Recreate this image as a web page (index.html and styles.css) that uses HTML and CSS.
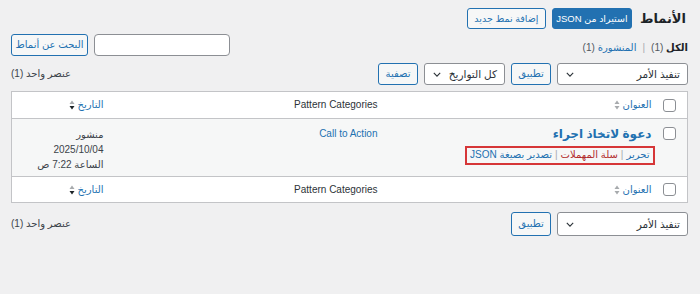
FILE: index.html
```html
<!DOCTYPE html>
<html lang="ar" dir="rtl">
<head>
<meta charset="utf-8">
<title>الأنماط</title>
<link rel="stylesheet" href="styles.css">
</head>
<body>
<div class="wrap">
  <div class="head">
    <h1 class="title">الأنماط</h1>
    <a class="btn primary">استيراد من JSON</a>
    <a class="btn add">إضافة نمط جديد</a>
  </div>

  <div class="row2">
    <ul class="subsub">
      <li><b class="current">الكل</b> <span class="count">(1)</span></li>
      <li class="sep">|</li>
      <li><a class="link">المنشورة</a> <span class="count">(1)</span></li>
    </ul>
    <div class="search">
      <div class="input"></div>
      <a class="btn">البحث عن أنماط</a>
    </div>
  </div>

  <div class="tablenav">
    <div class="actions">
      <div class="select bulk"><span>تنفيذ الأمر</span><svg class="chev" viewBox="0 0 10 6" width="8" height="5"><path d="M1 1l4 4 4-4" fill="none" stroke="#2c3338" stroke-width="1.4"/></svg></div>
      <a class="btn">تطبيق</a>
      <div class="select dates"><span>كل التواريخ</span><svg class="chev" viewBox="0 0 10 6" width="8" height="5"><path d="M1 1l4 4 4-4" fill="none" stroke="#2c3338" stroke-width="1.4"/></svg></div>
      <a class="btn">تصفية</a>
    </div>
    <div class="num">عنصر واحد (1)</div>
  </div>

  <table class="list">
    <colgroup>
      <col class="c-check"><col><col><col class="c-date">
    </colgroup>
    <thead>
      <tr>
        <td class="check"><span class="cb"></span></td>
        <th><a class="link sort">العنوان <svg class="arrows" viewBox="0 0 6 10" width="6" height="10"><path d="M3 0.5L5.5 4H0.5z" fill="#a7aaad"/><path d="M3 9.5L5.5 6H0.5z" fill="#a7aaad"/></svg></a></th>
        <th class="plain">Pattern Categories</th>
        <th><a class="link sort">التاريخ <svg class="arrows" viewBox="0 0 6 10" width="6" height="10"><path d="M3 0.5L5.5 4H0.5z" fill="#a7aaad"/><path d="M3 9.5L5.5 6H0.5z" fill="#1d2327"/></svg></a></th>
      </tr>
    </thead>
    <tbody>
      <tr class="item">
        <td class="check"><span class="cb"></span></td>
        <td>
          <a class="link row-title">دعوة لاتخاذ اجراء</a>
          <div class="row-actions"><a class="link">تحرير</a><span class="bar">|</span><a class="trash">سلة المهملات</a><span class="bar">|</span><a class="link">تصدير بصيغة JSON</a></div>
        </td>
        <td><a class="link">Call to Action</a></td>
        <td class="date">منشور<br>2025/10/04<br>الساعة 7:22 ص</td>
      </tr>
    </tbody>
    <tfoot>
      <tr>
        <td class="check"><span class="cb"></span></td>
        <th><a class="link sort">العنوان <svg class="arrows" viewBox="0 0 6 10" width="6" height="10"><path d="M3 0.5L5.5 4H0.5z" fill="#a7aaad"/><path d="M3 9.5L5.5 6H0.5z" fill="#a7aaad"/></svg></a></th>
        <th class="plain">Pattern Categories</th>
        <th><a class="link sort">التاريخ <svg class="arrows" viewBox="0 0 6 10" width="6" height="10"><path d="M3 0.5L5.5 4H0.5z" fill="#a7aaad"/><path d="M3 9.5L5.5 6H0.5z" fill="#1d2327"/></svg></a></th>
      </tr>
    </tfoot>
  </table>

  <div class="tablenav bottom">
    <div class="actions">
      <div class="select bulk"><span>تنفيذ الأمر</span><svg class="chev" viewBox="0 0 10 6" width="8" height="5"><path d="M1 1l4 4 4-4" fill="none" stroke="#2c3338" stroke-width="1.4"/></svg></div>
      <a class="btn">تطبيق</a>
    </div>
    <div class="num">عنصر واحد (1)</div>
  </div>
</div>
</body>
</html>
```

FILE: styles.css
```css
* { box-sizing: border-box; }
html, body { margin: 0; padding: 0; }
body {
  background: #f0f0f1;
  color: #3c434a;
  font-family: "Liberation Sans", "DejaVu Sans", sans-serif;
  font-size: 10px;
  line-height: 1.4;
  direction: rtl;
}
.wrap {
  padding: 8px 12px 0 11px;
}
.link { color: #2271b1; text-decoration: none; }

.head {
  display: flex;
  align-items: center;
  height: 21px;
}
.title {
  margin: 0 2px 0 8px;
  font-size: 13px;
  font-weight: 700;
  color: #1d2327;
  line-height: 21px;
}
.btn {
  display: inline-flex;
  align-items: center;
  justify-content: center;
  height: 22px;
  padding: 0 6px;
  border: 1px solid #2271b1;
  border-radius: 3px;
  background: #f6f7f7;
  color: #2271b1;
  font-size: 10px;
  white-space: nowrap;
}
.head .btn { margin-left: 6px; height: 21px; padding: 0; font-size: 9.5px; }
.head .btn.primary { width: 80px; }
.head .btn.add { width: 79px; }
.btn.primary { background: #2271b1; color: #fff; }

.row2 {
  display: flex;
  justify-content: space-between;
  align-items: flex-end;
  margin-top: 5px;
  height: 22px;
}
.subsub {
  list-style: none;
  margin: 0;
  padding: 0 0 1px 0;
  display: flex;
  gap: 6px;
  color: #50575e;
}
.subsub .current { color: #1d2327; }
.subsub .sep { color: #a7aaad; }
.search { display: flex; gap: 6px; }
.search .btn { width: 77px; padding: 0; }
.input {
  width: 136px;
  height: 22px;
  background: #fff;
  border: 1px solid #8c8f94;
  border-radius: 4px;
}

.tablenav {
  display: flex;
  justify-content: space-between;
  align-items: center;
  margin-top: 7px;
  height: 22px;
}
.tablenav.bottom { margin-top: 9px; height: 24px; }
.actions { display: flex; gap: 6px; }
.actions .btn { width: 40px; padding: 0; }
.select {
  display: flex;
  align-items: center;
  justify-content: space-between;
  height: 22px;
  padding: 0 7px 0 8px;
  background: #fff;
  border: 1px solid #8c8f94;
  border-radius: 3px;
  color: #2c3338;
  font-size: 10.5px;
}
.bottom .select, .bottom .btn { height: 24px; }
.select.bulk { width: 131px; }
.select.dates { width: 81px; }
.chev { display: block; }
.num { color: #3c434a; }

.list {
  width: 100%;
  margin-top: 6px;
  border-collapse: collapse;
  table-layout: fixed;
  background: #fff;
  border: 1px solid #c3c4c7;
}
.c-check { width: 31px; }
.c-date { width: 97px; }
.list th, .list td {
  text-align: right;
  font-weight: 400;
  vertical-align: middle;
  padding: 0 5px 0 8px;
}
.list thead tr { height: 27px; border-bottom: 1px solid #c3c4c7; }
.list tfoot tr { height: 26px; border-top: 1px solid #c3c4c7; }
.list th.plain { color: #2c3338; }
.list td.check { padding: 0 11px 0 0; }
.cb {
  display: block;
  width: 13px;
  height: 13px;
  border: 1px solid #8c8f94;
  border-radius: 3px;
  background: #fff;
}
.sort { display: inline-flex; align-items: center; gap: 3px; }
.arrows { display: block; }

.item { background: #f6f7f7; height: 58px; }
.item td { vertical-align: top; padding-top: 8px; }
.item td.check { padding-top: 8px; }
.row-title { font-size: 12px; font-weight: 700; display: block; line-height: 14px; }
.row-actions {
  display: inline-flex;
  align-items: center;
  gap: 3px;
  margin-top: 5px;
  margin-right: -3px;
  padding: 1px 3px 2px 3px;
  border: 2px solid #d63638;
  height: 19px;
}
.row-actions .bar { color: #a7aaad; }
.trash { color: #b32d2e; }
.date { color: #3c434a; line-height: 15px; }
.item td.date { padding-top: 8px; }
```
